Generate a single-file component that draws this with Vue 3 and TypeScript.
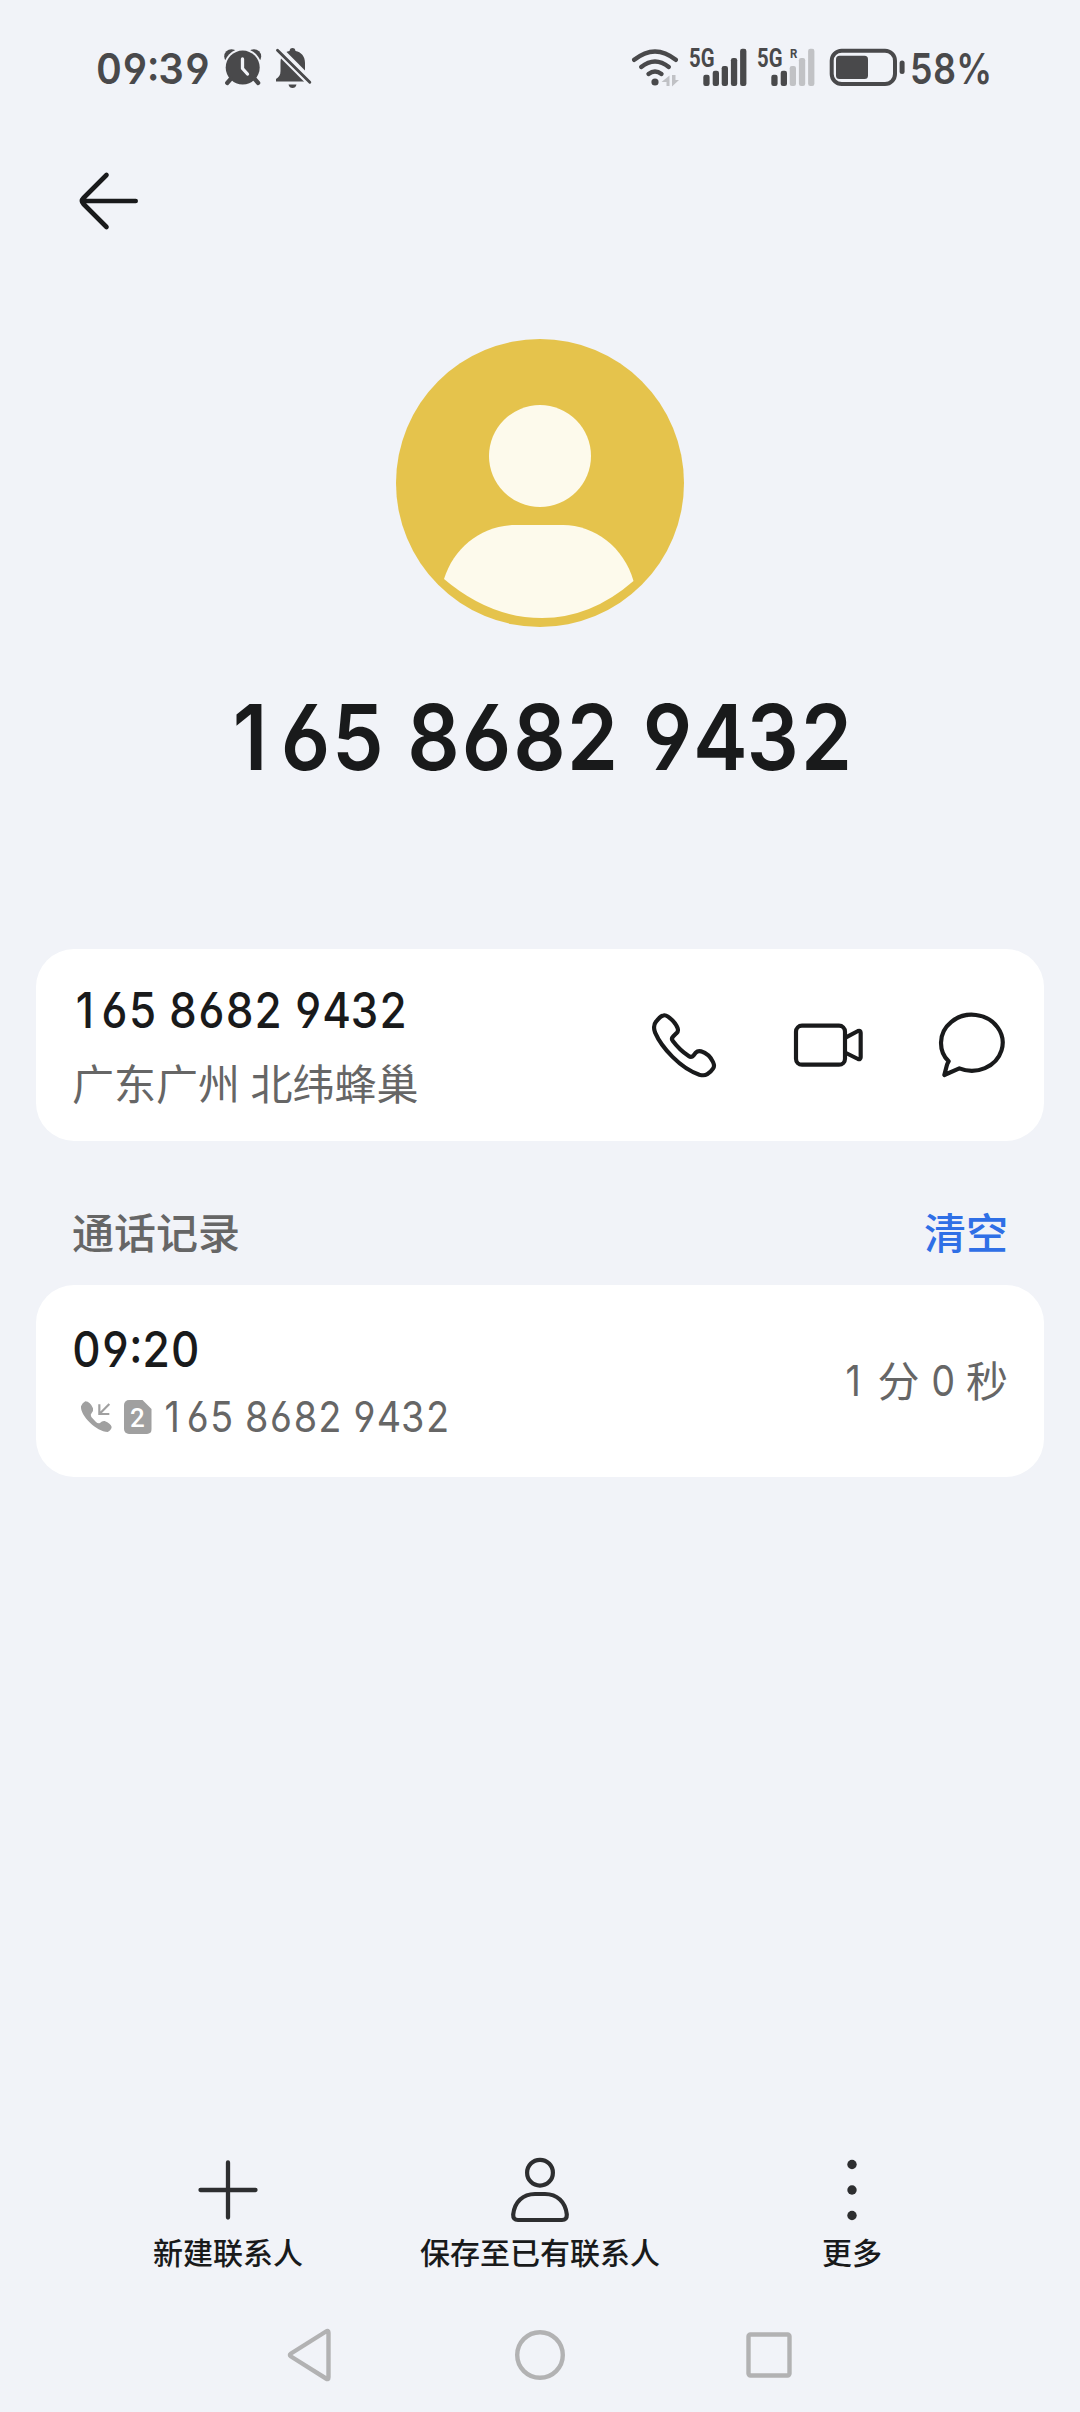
<script setup lang="ts">
interface Bar { x: number; y: number; on: boolean }

const barShape: [number, number][] = [[23.3, 37.7], [32.7, 33.7], [41.7, 29], [50.9, 21], [60.1, 11.7]]
const makeBars = (active: number): Bar[] => barShape.map(([x, y], i) => ({ x, y, on: i < active }))

const sims = [
  { id: 'sim1', bars: makeBars(5), roaming: false },
  { id: 'sim2', bars: makeBars(2), roaming: true },
]
const restOfNumber = '65 8682 9432'
</script>

<template>
  <div class="screen">
    <header class="status">
      <div class="clock num">09:39</div>
      <svg class="alarm" width="40" height="42" viewBox="0 0 40 42">
        <g fill="#49494b">
          <circle cx="9.500" cy="10.500" r="7.300" />
          <circle cx="31.900" cy="10.500" r="7.300" />
        </g>
        <circle cx="20.700" cy="21.600" r="19" fill="#f1f3f8" />
        <circle cx="20.700" cy="21.600" r="17" fill="#49494b" />
        <g fill="none" stroke-linecap="round">
          <path d="M8.700 33 5.200 37M32.700 33 36.200 37" stroke="#49494b" stroke-width="4.200" />
          <path d="M20.500 13V22.500L25.500 28" stroke="#f1f3f8" stroke-width="3.300" stroke-linejoin="round" />
        </g>
      </svg>
      <svg class="bell" width="38" height="44" viewBox="0 0 38 44">
        <g fill="#49494b">
          <path d="M2 35.500V33C5 31 6.500 29 6.500 25V17C6.500 9.500 10 6 15.500 5C16 2.600 17 2 18.500 2S21 2.600 21.500 5C27 6 31 10 31 17V25L31.500 31L30 35.500Z" />
          <path d="M14.500 38.500H22.500C22 41 20.500 42 18.500 42S15 41 14.500 38.500Z" />
        </g>
        <path d="M-1 -1.500 37 36.500" stroke="#f1f3f8" stroke-width="8.600" />
        <path d="M3.500 4.200 35.800 36.200" stroke="#49494b" stroke-width="2.900" stroke-linecap="round" />
      </svg>
      <svg class="wifi" width="50" height="42" viewBox="0 0 50 42">
        <g fill="none" stroke="#49494b" stroke-width="4.400" stroke-linecap="round">
          <path d="M4.200 12.800Q25 -4 45.800 12.800" />
          <path d="M11.200 20Q25 9 38.800 20" />
          <path d="M18.500 27Q25 22 31.500 27" />
        </g>
        <circle cx="25" cy="35" r="3.600" fill="#49494b" />
        <g fill="#c0c1c5">
          <path d="M39.500 28.500V39H36.500V35H31.500Z" />
          <path d="M42 28V39.500L49 33H45.500V28Z" />
        </g>
      </svg>
      <div v-for="sim in sims" :key="sim.id" class="sim">
        <span class="net">5G</span>
        <span v-if="sim.roaming" class="roam">R</span>
        <svg width="68" height="52" viewBox="0 0 68 52">
          <rect v-for="b in sim.bars" :key="b.x" :x="b.x" :y="b.y" width="6.300" :height="49 - b.y" rx="2.200" :fill="b.on ? '#49494b' : '#c1c2c5'" />
        </svg>
      </div>
      <svg class="battery" width="78" height="40" viewBox="0 0 78 40">
        <rect x="3.700" y="2.700" width="63.300" height="33.300" rx="10" fill="none" stroke="#49494b" stroke-width="4" />
        <rect x="8" y="7.700" width="32" height="23.300" rx="3.500" fill="#49494b" />
        <rect x="71.600" y="12.500" width="5" height="13.500" rx="2.500" fill="#49494b" />
      </svg>
      <div class="percent num">58%</div>
    </header>

    <nav class="topbar">
      <svg width="64" height="60" viewBox="0 0 64 60" fill="none" stroke="#191a1b" stroke-width="4.600" stroke-linecap="round" stroke-linejoin="round">
        <path d="M32.500 4 9.500 27Q6.500 30 9.500 33L32.500 56M9 30H61.700" />
      </svg>
    </nav>

    <section class="profile">
      <svg class="avatar" width="288" height="288" viewBox="0 0 288 288">
        <circle cx="144" cy="144" r="144" fill="#e5c34c" />
        <g fill="#fdfaec">
          <circle cx="144" cy="117" r="51" />
          <path d="M120 186H167C198 186 228 208 237.500 242Q195 279 146 279Q94 279 48 240C58 208 86 186 120 186Z" />
        </g>
      </svg>
      <h1 class="title num"><span class="one">1</span>{{ restOfNumber }}</h1>
    </section>

    <section class="card contact">
      <div class="info">
        <div class="line num strong"><span class="one">1</span>{{ restOfNumber }}</div>
        <div class="place">广东广州 北纬蜂巢</div>
      </div>
      <svg class="action" width="67" height="67" viewBox="152 215 201 201" fill="none" stroke="#191a1b" stroke-width="12.500" stroke-linejoin="round">
        <path d="M190 225Q181 226 167 244Q157 256 164 276C184 322 240 384 297 403Q312 407 320 402Q331 396 338 385Q344 378 338 365C330 348 315 337 302 333Q292 331 286 337L280 345Q273 353 265 347Q237 328 217 301Q212 295 219 288L228 279Q235 273 232 264Q225 245 203 229Q196 224 190 225Z" />
      </svg>
      <svg class="action" width="73" height="67" viewBox="578 215 219 201" fill="none" stroke="#191a1b" stroke-width="12.500" stroke-linejoin="round">
        <rect x="587" y="256" width="147" height="117" rx="18" />
        <path d="M737 291 773 272Q781 269 781 277V351Q781 359 773 356L737 338" />
      </svg>
      <svg class="action" width="68" height="67" viewBox="1014 215 204 201" fill="none" stroke="#191a1b" stroke-width="12.500" stroke-linejoin="round">
        <path d="M1046 363C1031 349 1023 330 1023 308A92.500 84 0 1 1 1078 384L1033 404L1040 377Q1042 369 1046 363Z" />
      </svg>
    </section>

    <div class="section-head">
      <span>通话记录</span>
      <span class="clear">清空</span>
    </div>

    <section class="card record">
      <div class="info">
        <div class="time num strong">09:20</div>
        <div class="from">
          <svg class="incoming" width="33" height="34" viewBox="150 628 99 102">
            <path d="M166 632Q157 636 153 647C150 675 200 724 233 724Q244 718 245 709Q242 698 224 691Q216 690 210 697Q204 700 198 694L184 679Q180 672 185 667Q191 660 189 653Q181 633 166 632Z" fill="#a0a0a0" />
            <path d="M238 640 209 669M208 641V670H238" fill="none" stroke="#a0a0a0" stroke-width="6.500" />
          </svg>
          <span class="simcard">2</span>
          <span class="caller num"><span class="one">1</span>{{ restOfNumber }}</span>
        </div>
      </div>
      <div class="duration">
        <span class="cell num"><span class="one">1</span></span><span class="unit">分</span><span class="cell num">0</span><span class="unit">秒</span>
      </div>
    </section>

    <footer class="toolbar">
      <div class="tool">
        <svg width="66" height="66" viewBox="0 0 66 66" stroke="#2d2e30" stroke-width="4.300" stroke-linecap="round">
          <path d="M33 5.500V60.500M5.500 33H60.500" />
        </svg>
        <span>新建联系人</span>
      </div>
      <div class="tool">
        <svg width="66" height="66" viewBox="0 0 66 66" fill="none" stroke="#2d2e30" stroke-width="4.200" stroke-linejoin="round">
          <circle cx="33" cy="15.700" r="12.900" />
          <path d="M28 37H38C50 37 58.500 45 59.800 57.500Q60 63 55 63H11Q6 63 6.200 57.500C7.500 45 16 37 28 37Z" />
        </svg>
        <span>保存至已有联系人</span>
      </div>
      <div class="tool">
        <svg width="66" height="66" viewBox="0 0 66 66" fill="#2d2e30">
          <circle cx="33" cy="7.500" r="4.700" /><circle cx="33" cy="33" r="4.700" /><circle cx="33" cy="58.500" r="4.700" />
        </svg>
        <span>更多</span>
      </div>
    </footer>

    <nav class="system">
      <svg width="54" height="54" viewBox="0 0 54 54">
        <path d="M44.500 4.800V49.200Q44.500 52 42 50.500L7 28.500Q4.800 27 7 25.500L42 3.500Q44.500 2 44.500 4.800Z" />
      </svg>
      <svg width="54" height="54" viewBox="0 0 54 54"><circle cx="27" cy="27" r="22.800" /></svg>
      <svg width="54" height="54" viewBox="0 0 54 54"><rect x="6.500" y="6.500" width="41" height="41" rx="2" /></svg>
    </nav>
  </div>
</template>

<style>
body { background: #f1f3f8; }
</style>

<style scoped>
.screen {
  width: 1080px;
  height: 2412px;
  background: #f1f3f8;
  display: flex;
  flex-direction: column;
  overflow: hidden;
  color: #191a1b;
  font-family: "Noto Sans CJK SC", sans-serif;
}
svg { display: block; flex: none; }

/* Condensed tabular figures with straight-stemmed 6 and 9 */
.num {
  font-family: Inter, "Noto Sans CJK SC", sans-serif;
  font-feature-settings: "tnum", "cv03", "cv04";
  white-space: nowrap;
  transform: scaleX(0.897);
  transform-origin: left center;
}
.one {
  display: inline-block;
  width: 0.648em;
  text-align: center;
  text-indent: -0.06em;
  font-feature-settings: normal;
}

.status {
  height: 136px;
  flex: none;
  display: flex;
  align-items: center;
  color: #49494b;
  box-sizing: border-box;
  padding-left: 96px;
}
.status > * { flex: none; }
.clock { width: 126px; font-size: 42.500px; font-weight: 600; transform: scaleX(0.942); }
.alarm { margin-top: -2px; }
.bell { margin-left: 12px; }
.wifi { margin-left: 318px; margin-top: -1px; }
.sim { position: relative; width: 68px; height: 62px; display: flex; }
.battery { margin-left: 12px; margin-top: -1px; }
.net {
  position: absolute;
  left: 9px;
  top: 8px;
  font: 700 26px/26px Roboto, sans-serif;
  transform: scaleX(0.78);
  transform-origin: left center;
}
.roam {
  position: absolute;
  left: 42px;
  top: 10px;
  font: 700 13px/13px Roboto, sans-serif;
  transform: scaleX(0.88);
  transform-origin: left center;
}
.percent { margin-left: 4px; font-size: 42.500px; font-weight: 640; transform: scaleX(0.84); }

.topbar { height: 130px; flex: none; padding-left: 74px; display: flex; align-items: center; }

.profile { height: 683px; flex: none; display: flex; flex-direction: column; align-items: center; }
.avatar { margin-top: 72.700px; }
.title {
  margin: 60px 0 0 226px;
  line-height: 100px;
  font-size: 91px;
  font-weight: 560;
  align-self: flex-start;
  transform: scaleX(0.9);
}

.card {
  margin: 0 36px;
  height: 192px;
  flex: none;
  border-radius: 38px;
  background: #fff;
  display: flex;
  align-items: center;
  box-sizing: border-box;
  padding: 0 36px;
}
.info { height: 192px; box-sizing: border-box; }
.strong { font-size: 48.800px; font-weight: 550; }
.line { line-height: 60px; margin-top: 31.500px; margin-left: -0.500px; }
.contact .info { width: 578.700px; flex: none; }
.place { margin-top: 11px; font-size: 42px; line-height: 60px; color: #666; word-spacing: 1px; white-space: nowrap; }
.action { margin-right: 75px; }
.action + .action { margin-right: 72px; }
.action + .action + .action { margin-right: 0; }

.section-head {
  height: 144px;
  flex: none;
  box-sizing: border-box;
  padding: 60px 72px 0;
  display: flex;
  justify-content: space-between;
  font-size: 42px;
  font-weight: 500;
  line-height: 60px;
  color: #666;
}
.clear { color: #2f6fe6; }

.record { justify-content: space-between; }
.time { line-height: 60px; margin-top: 34.500px; transform: scaleX(0.914); }
.from { height: 60px; margin-top: 7.500px; display: flex; align-items: center; }
.incoming { margin-left: 7.500px; }
.simcard {
  width: 28px;
  height: 34px;
  margin-left: 11px;
  border-radius: 5px;
  background: #a0a0a0;
  clip-path: polygon(0 0, 19px 0, 100% 9px, 100% 100%, 0 100%);
  color: #fff;
  text-align: center;
  font: 500 26px/36px Roboto, sans-serif;
}
.caller { margin-left: 9px; font-size: 42px; line-height: 60px; color: #666; }
.duration { display: flex; align-items: center; gap: 11px; height: 60px; font-size: 42px; line-height: 60px; color: #666; }
.cell { width: 24.400px; }
.unit { position: relative; top: -2.400px; }

.toolbar { margin-top: auto; height: 134px; flex: none; display: flex; justify-content: center; }
.tool { width: 312px; display: flex; flex-direction: column; align-items: center; font-size: 30px; font-weight: 500; line-height: 44px; white-space: nowrap; }
.tool span { margin-top: 5.500px; }

.system { height: 121px; flex: none; display: flex; justify-content: center; align-items: flex-start; gap: 175px; }
.system svg { margin-top: 37px; fill: none; stroke: #b2b2b3; stroke-width: 4.400; stroke-linejoin: round; }
</style>
